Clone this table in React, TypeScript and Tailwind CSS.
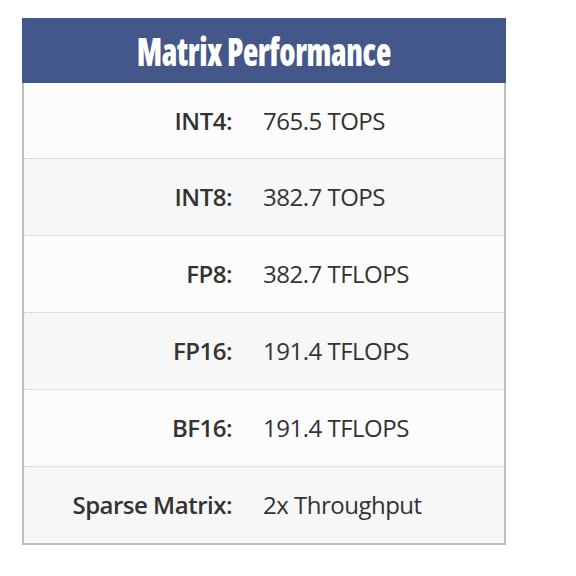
import React from 'react'

const rows = [
  { label: 'INT4:', value: '765.5 TOPS' },
  { label: 'INT8:', value: '382.7 TOPS' },
  { label: 'FP8:', value: '382.7 TFLOPS' },
  { label: 'FP16:', value: '191.4 TFLOPS' },
  { label: 'BF16:', value: '191.4 TFLOPS' },
  { label: 'Sparse Matrix:', value: '2x Throughput' },
]

const App: React.FC = () => {
  return (
    <div className="w-[576px] h-[576px] bg-white pt-[18px] pl-[22px]" style={{ fontFamily: '"Open Sans", sans-serif' }}>
      <div className="w-[484px]">
        <div className="h-[65px] bg-[#44578a] flex items-center justify-center">
          <h2
            className="text-white text-[39px] font-extrabold tracking-[-0.5px] leading-none scale-x-[0.81]"
            style={{ fontStretch: 'condensed' }}
          >
            Matrix Performance
          </h2>
        </div>
        <div className="border-x-2 border-b-2 border-[#bdbdbd]">
          {rows.map((r, i) => (
            <div
              key={r.label}
              className={`flex items-center text-[24px] tracking-[-0.5px] text-[#333] ${i > 0 ? 'h-[77px] border-t border-dotted border-[#c8c8c8]' : 'h-[75px]'} ${i % 2 === 0 ? 'bg-[#fcfcfc]' : 'bg-[#f7f7f7]'}`}
            >
              <div className="w-[208px] text-right font-semibold">{r.label}</div>
              <div className="pl-[31px]">{r.value}</div>
            </div>
          ))}
        </div>
      </div>
    </div>
  )
}

export default App
